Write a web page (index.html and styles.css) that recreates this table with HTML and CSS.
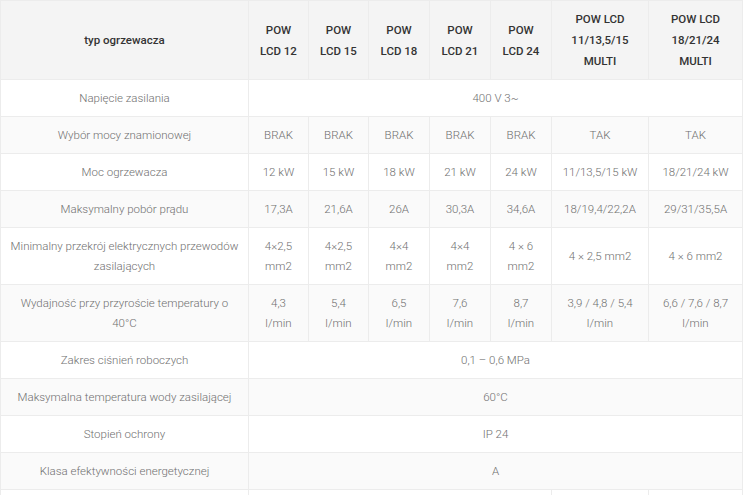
FILE: index.html
```html
<!DOCTYPE html>
<html lang="pl">
<head>
<meta charset="utf-8">
<link rel="stylesheet" href="styles.css">
</head>
<body>
<table class="spec">
  <colgroup>
    <col class="c-name">
    <col class="c-s1">
    <col class="c-s2">
    <col class="c-s3">
    <col class="c-s4">
    <col class="c-s5">
    <col class="c-m1">
    <col class="c-m2">
  </colgroup>
  <thead>
    <tr>
      <th>typ ogrzewacza</th>
      <th>POW<br>LCD 12</th>
      <th>POW<br>LCD 15</th>
      <th>POW<br>LCD 18</th>
      <th>POW<br>LCD 21</th>
      <th>POW<br>LCD 24</th>
      <th>POW LCD<br>11/13,5/15<br>MULTI</th>
      <th>POW LCD<br>18/21/24<br>MULTI</th>
    </tr>
  </thead>
  <tbody>
    <tr>
      <td>Napięcie zasilania</td>
      <td colspan="7">400 V 3~</td>
    </tr>
    <tr>
      <td>Wybór mocy znamionowej</td>
      <td>BRAK</td><td>BRAK</td><td>BRAK</td><td>BRAK</td><td>BRAK</td><td>TAK</td><td>TAK</td>
    </tr>
    <tr>
      <td>Moc ogrzewacza</td>
      <td>12 kW</td><td>15 kW</td><td>18 kW</td><td>21 kW</td><td>24 kW</td><td>11/13,5/15 kW</td><td>18/21/24 kW</td>
    </tr>
    <tr>
      <td>Maksymalny pobór prądu</td>
      <td>17,3A</td><td>21,6A</td><td>26A</td><td>30,3A</td><td>34,6A</td><td>18/19,4/22,2A</td><td>29/31/35,5A</td>
    </tr>
    <tr>
      <td>Minimalny przekrój elektrycznych przewodów zasilających</td>
      <td>4×2,5 mm2</td><td>4×2,5 mm2</td><td>4×4 mm2</td><td>4×4 mm2</td><td>4 × 6 mm2</td><td>4 × 2,5 mm2</td><td>4 × 6 mm2</td>
    </tr>
    <tr>
      <td>Wydajność przy przyroście temperatury o 40°C</td>
      <td>4,3 l/min</td><td>5,4 l/min</td><td>6,5 l/min</td><td>7,6 l/min</td><td>8,7 l/min</td><td>3,9 / 4,8 / 5,4 l/min</td><td>6,6 / 7,6 / 8,7 l/min</td>
    </tr>
    <tr>
      <td>Zakres ciśnień roboczych</td>
      <td colspan="7">0,1 – 0,6 MPa</td>
    </tr>
    <tr>
      <td>Maksymalna temperatura wody zasilającej</td>
      <td colspan="7">60°C</td>
    </tr>
    <tr>
      <td>Stopień ochrony</td>
      <td colspan="7">IP 24</td>
    </tr>
    <tr>
      <td>Klasa efektywności energetycznej</td>
      <td colspan="7">A</td>
    </tr>
    <tr class="tail">
      <td>&nbsp;</td>
      <td colspan="5">&nbsp;</td>
      <td>&nbsp;</td>
      <td>&nbsp;</td>
    </tr>
  </tbody>
</table>
</body>
</html>
```

FILE: styles.css
```css
html, body {
  margin: 0;
  padding: 0;
  background: #ffffff;
}

body {
  font-family: Roboto, "Liberation Sans", Arial, sans-serif;
}

.spec {
  border-collapse: collapse;
  table-layout: fixed;
  width: 742px;
  border: 1px solid #ececec;
}

.c-name { width: 248px; }
.c-s1 { width: 60px; }
.c-s2 { width: 60px; }
.c-s3 { width: 61px; }
.c-s4 { width: 61px; }
.c-s5 { width: 61px; }
.c-m1 { width: 97px; }
.c-m2 { width: 94px; }

.spec th,
.spec td {
  border: 1px solid #ececec;
  text-align: center;
  vertical-align: middle;
  padding: 8px 10px;
}

.spec td:first-child {
  padding: 8px 7px;
}

.spec th {
  background: #f4f4f4;
  color: #333333;
  font-weight: 500;
  font-size: 11.5px;
  line-height: 21px;
  padding: 8px 6px 7px;
}

.spec td {
  color: #707070;
  font-size: 11.5px;
  line-height: 20px;
  font-weight: 300;
}

.spec tbody tr:nth-child(even) td {
  background: #fafafa;
}

.spec tbody tr:nth-child(odd) td {
  background: #ffffff;
}
```
